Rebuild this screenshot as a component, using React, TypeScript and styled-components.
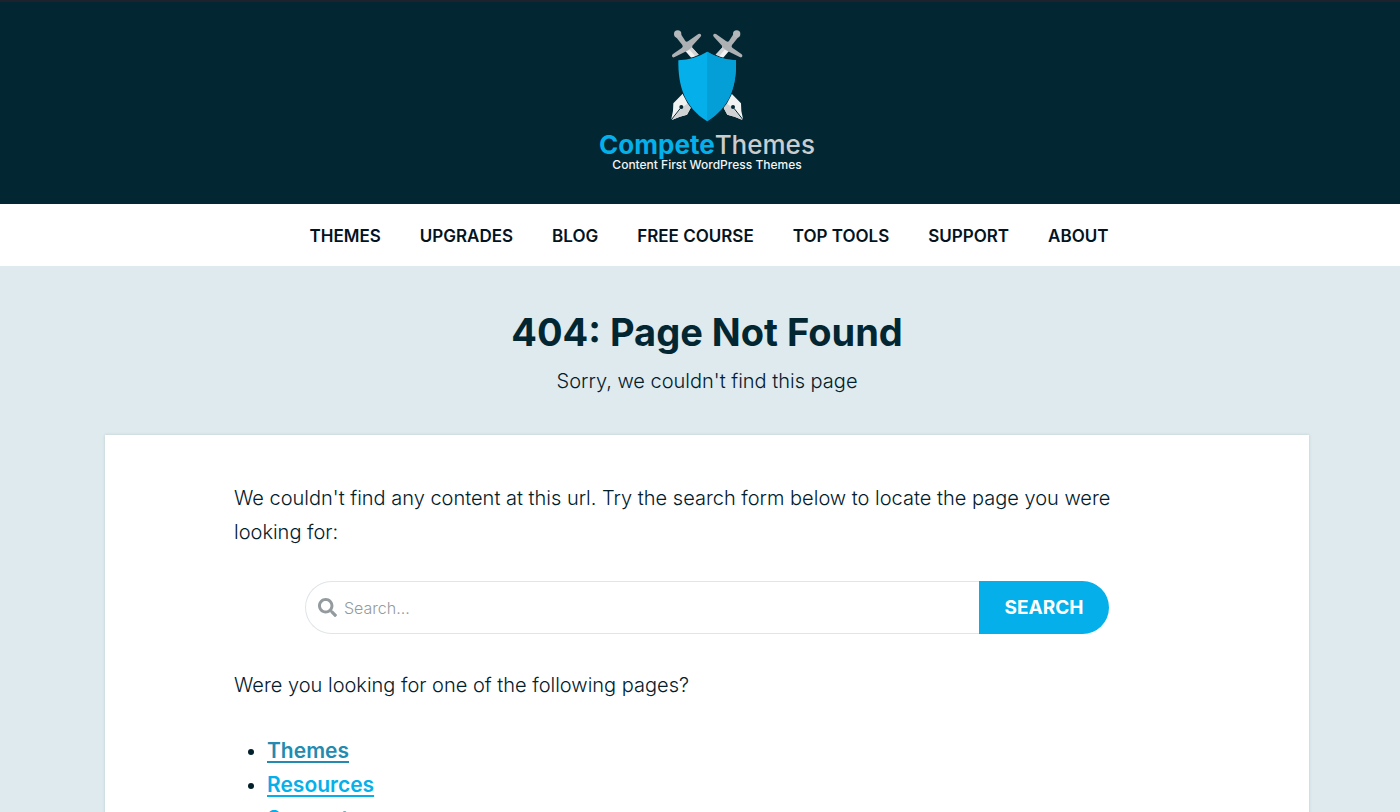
import React from 'react';
import styled, { createGlobalStyle } from 'styled-components';

const GlobalStyle = createGlobalStyle`
  *, *::before, *::after { box-sizing: border-box; }
  body {
    margin: 0;
    background: #deeaee;
    color: #02202c;
    font-family: Inter, "Liberation Sans", sans-serif;
    font-size: 20px;
    font-weight: 300;
    line-height: 34px;
  }
  p, h1, ul { margin: 0; padding: 0; }
`;

const Header = styled.header`
  display: flex;
  justify-content: center;
  padding: 27px 0 32px 14px;
  background: #022732;
  border-top: 2px solid #1d222c;
`;

const LogoLink = styled.a`
  display: flex;
  flex-direction: column;
  align-items: center;
  text-decoration: none;
`;

const Emblem = styled.svg`
  width: 75px;
  height: 94px;
`;

const Wordmark = styled.span`
  margin-top: 8px;
  font-size: 26px;
  font-weight: 500;
  line-height: 28px;
  color: #c9cdd0;

  b {
    font-weight: 700;
    color: #05b0ea;
  }
`;

const Tagline = styled.span`
  margin-top: -1px;
  font-size: 12px;
  font-weight: 500;
  line-height: 14px;
  color: #f2f4f5;
`;

const Nav = styled.nav`
  display: flex;
  flex-wrap: wrap;
  justify-content: center;
  gap: 0 39px;
  padding: 15px 0 13px 18px;
  background: #fff;
`;

const NavLink = styled.a`
  font-size: 17px;
  font-weight: 600;
  line-height: 34px;
  text-transform: uppercase;
  text-decoration: none;
  color: #02141f;
`;

const Main = styled.main`
  padding: 40px 0 0 14px;
`;

const Intro = styled.div`
  padding-bottom: 37px;
  text-align: center;
`;

const Title = styled.h1`
  font-size: 38px;
  font-weight: 700;
  line-height: 52px;
  margin-bottom: 6px;
  color: #022732;
`;

const Card = styled.section`
  width: 87%;
  max-width: 1204px;
  margin: 0 auto;
  padding: 46px 129px 60px;
  background: #fff;
  box-shadow: 0 0 3px rgba(2, 39, 50, 0.15);
`;

const SearchForm = styled.form`
  display: flex;
  width: 85%;
  height: 53px;
  margin: 32px auto 34px;
`;

const SearchField = styled.label`
  display: flex;
  flex: 1;
  align-items: center;
  gap: 7px;
  padding-left: 12px;
  border: 1px solid #dfe5e8;
  border-right: 0;
  border-radius: 27px 0 0 27px;
  color: #939b9f;
`;

const SearchInput = styled.input`
  flex: 1;
  min-width: 0;
  height: 100%;
  padding: 0;
  border: 0;
  outline: 0;
  background: transparent;
  font: inherit;
  font-size: 16px;
  color: #02202c;

  &::placeholder {
    color: #939b9f;
    opacity: 1;
  }
`;

const SearchButton = styled.button`
  width: 130px;
  padding: 0;
  border: 0;
  border-radius: 0 27px 27px 0;
  background: #05b0ea;
  color: #fff;
  font: inherit;
  font-size: 19px;
  font-weight: 700;
  cursor: pointer;
`;

const PageList = styled.ul`
  && {
    margin-top: 32px;
    padding-left: 33px;
  }
`;

const PageLink = styled.a<{ $active?: boolean }>`
  font-size: 21px;
  font-weight: 600;
  color: ${({ $active }) => ($active ? '#238bb0' : '#05b0ea')};
  text-decoration: underline;
  text-decoration-thickness: 2px;
  text-underline-offset: 3px;
`;

const navItems = ['Themes', 'Upgrades', 'Blog', 'Free Course', 'Top Tools', 'Support', 'About'];
const pages = ['Themes', 'Resources', 'Support'];

const Sword = () => (
  <>
    <path d="M286 93 L304 80 L326 104 L306 116 Z" fill="#f2f2f2" />
    <path d="M296 86 L304 80 L326 104 L317 110 Z" fill="#d2d4d5" />
    <path
      d="M256 49 L270 38 L286 63 Q289 67 294 64 L325 42 Q331 40 333 44 Q335 47 331 51 L307 77 L307 80 L295 91 L254 111 Q248 114 246 109 Q245 105 249 102 L276 83 Q280 80 277 75 Z"
      fill="#adb1b3"
    />
    <circle cx="263" cy="42" r="11" fill="#b4b8ba" />
    <path d="M278 221 L304 260 L291 284 Q270 288 247 299 L244 296 Q251 272 250 250 Z" fill="#f1f2f2" />
    <path d="M304 260 L291 284 Q270 288 247 299 L275 263 L296 248 Z" fill="#d0d2d4" />
    <path d="M245 298 L271 265" stroke="#022732" strokeWidth="3" />
    <circle cx="274" cy="261" r="6" fill="#022732" />
  </>
);

const SearchIcon = () => (
  <svg width="19" height="19" viewBox="0 0 512 512" fill="currentColor" aria-hidden="true">
    <path d="M505 442.7 405.3 343c-4.5-4.500-10.600-7-17-7H372c27.600-35.300 44-79.700 44-128C416 93.100 322.900 0 208 0S0 93.100 0 208s93.100 208 208 208c48.300 0 92.700-16.400 128-44v16.300c0 6.400 2.500 12.500 7 17l99.700 99.700c9.400 9.400 24.600 9.400 33.900 0l28.300-28.300c9.400-9.400 9.400-24.600.1-34zM208 336c-70.700 0-128-57.200-128-128 0-70.700 57.200-128 128-128 70.700 0 128 57.200 128 128 0 70.700-57.200 128-128 128z" />
  </svg>
);

export default function App() {
  return (
    <>
      <GlobalStyle />
      <Header>
        <LogoLink href="#">
          <Emblem viewBox="240 27 225 282" aria-hidden="true">
            <Sword />
            <g transform="matrix(-1 0 0 1 703 0)">
              <Sword />
            </g>
            <path
              d="M351.500 95 Q388 118 438 121 C440 198 420 262 351.500 304 C284 262 264 198 265 121 Q315 118 351.500 95Z"
              fill="#05b0ea"
              stroke="#022732"
              strokeWidth="5"
              paintOrder="stroke"
            />
            <path d="M351.500 95 Q388 118 438 121 C440 198 420 262 351.500 304Z" fill="#049fd6" />
          </Emblem>
          <Wordmark>
            <b>Compete</b>Themes
          </Wordmark>
          <Tagline>Content First WordPress Themes</Tagline>
        </LogoLink>
      </Header>
      <Nav>
        {navItems.map((item) => (
          <NavLink href="#" key={item}>
            {item}
          </NavLink>
        ))}
      </Nav>
      <Main>
        <Intro>
          <Title>404: Page Not Found</Title>
          <p>Sorry, we couldn't find this page</p>
        </Intro>
        <Card>
          <p>
            We couldn't find any content at this url. Try the search form below to locate the page
            you were looking for:
          </p>
          <SearchForm role="search" onSubmit={(event) => event.preventDefault()}>
            <SearchField>
              <SearchIcon />
              <SearchInput type="search" placeholder="Search..." aria-label="Search" />
            </SearchField>
            <SearchButton type="submit">SEARCH</SearchButton>
          </SearchForm>
          <p>Were you looking for one of the following pages?</p>
          <PageList>
            {pages.map((page, index) => (
              <li key={page}>
                <PageLink href="#" $active={index === 0}>
                  {page}
                </PageLink>
              </li>
            ))}
          </PageList>
        </Card>
      </Main>
    </>
  );
}
